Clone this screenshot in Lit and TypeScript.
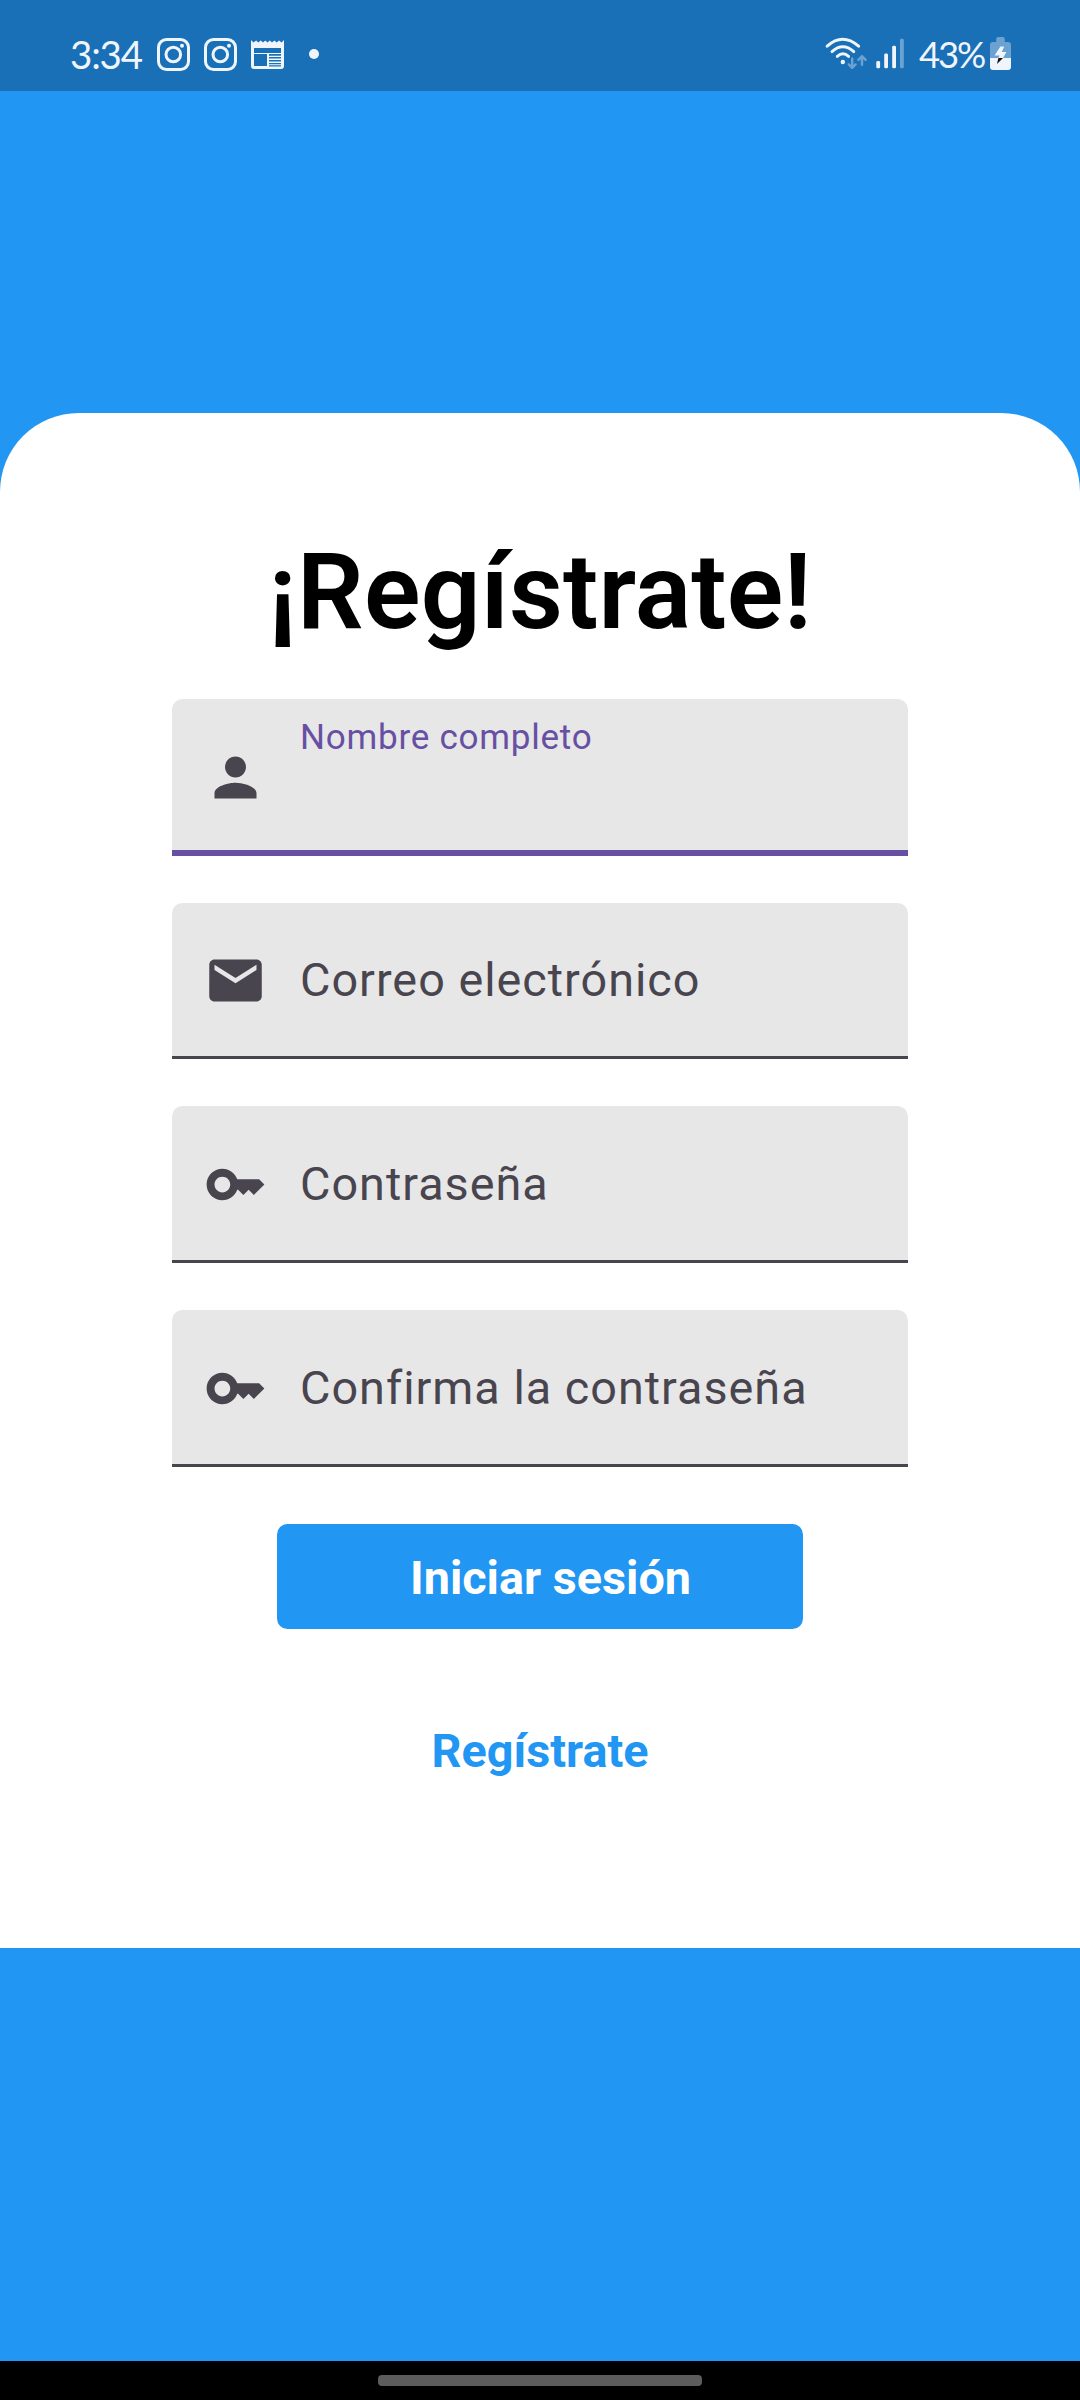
import { LitElement, html, css, svg } from "lit";
import { customElement, property } from "lit/decorators.js";

const ICONS: Record<string, unknown> = {
  person: svg`<path d="M12 12c2.21 0 4-1.79 4-4s-1.79-4-4-4-4 1.79-4 4 1.79 4 4 4zm0 2c-2.67 0-8 1.34-8 4v2h16v-2c0-2.66-5.33-4-8-4z"/>`,
  email: svg`<path d="M20 4H4c-1.1 0-1.99.9-1.99 2L2 18c0 1.1.9 2 2 2h16c1.1 0 2-.9 2-2V6c0-1.1-.9-2-2-2zm0 4l-8 5-8-5V6l8 5 8-5v2z"/>`,
  key: svg`<path d="M21 10h-8.35C11.83 7.67 9.61 6 7 6c-3.31 0-6 2.69-6 6s2.69 6 6 6c2.61 0 4.83-1.67 5.65-4H13l2 2 2-2 2 2 4-4.04L21 10zM7 15c-1.65 0-3-1.35-3-3s1.35-3 3-3 3 1.35 3 3-1.35 3-3 3z"/>`,
};

@customElement("text-field")
class TextField extends LitElement {
  @property() label = "";
  @property() icon = "person";
  @property({ type: Boolean, reflect: true }) focused = false;

  static styles = css`
    :host {
      display: flex;
      flex-direction: column;
      box-sizing: border-box;
      height: 156.5px;
      background: #e7e7e7;
      border-radius: 10.5px 10.5px 0 0;
      color: #49454f;
    }
    .row {
      flex: 1;
      display: flex;
      align-items: center;
      padding-left: 32px;
    }
    .icon {
      width: 63px;
      height: 63px;
      fill: currentColor;
      margin-right: 33px;
      flex: none;
    }
    .label {
      font-size: 46.75px;
      line-height: 63px;
      letter-spacing: 1px;
      white-space: nowrap;
    }
    .line {
      height: 3px;
      margin-top: -3px;
      background: #49454f;
    }
    :host([focused]) .label {
      align-self: flex-start;
      margin-top: 14px;
      font-size: 35.06px;
      line-height: 48px;
      letter-spacing: 0.75px;
      color: #6750a4;
    }
    :host([focused]) .line {
      height: 5.5px;
      margin-top: -5.5px;
      background: #6750a4;
    }
  `;

  render() {
    return html`
      <div class="row">
        <svg class="icon" viewBox="0 0 24 24">${ICONS[this.icon]}</svg>
        <span class="label">${this.label}</span>
      </div>
      <div class="line"></div>
    `;
  }
}

@customElement("status-bar")
class StatusBar extends LitElement {
  static styles = css`
    :host {
      display: flex;
      justify-content: space-between;
      box-sizing: border-box;
      height: 91px;
      padding: 36px 69px 0 70px;
      background: #1a70b6;
      color: #f0f5fc;
      font-family: Lato, "Open Sans", sans-serif;
      font-size: 38.5px;
      line-height: 36px;
    }
    .group {
      display: flex;
      height: 36px;
    }
    svg {
      display: block;
      height: 36px;
      flex: none;
    }
    .time {
      width: 87px;
      letter-spacing: -1.2px;
    }
    .photo {
      margin-right: 14px;
    }
    .dot {
      width: 10px;
      height: 10px;
      border-radius: 50%;
      background: currentColor;
      margin: 13px 0 0 25px;
    }
    .wifi {
      margin-right: 9px;
    }
    .signal {
      margin-right: 15px;
    }
    .percent {
      width: 71px;
      letter-spacing: -2.2px;
      font-size: 36.5px;
      white-space: nowrap;
    }
  `;

  private photo() {
    return html`<svg class="photo" width="33" viewBox="0 0 33 36" fill="none" stroke="#f0f5fc">
      <rect x="1.5" y="3.5" width="30" height="30" rx="8" stroke-width="3" />
      <circle cx="16.3" cy="18.5" r="7.3" stroke-width="3" />
      <circle cx="25" cy="9.8" r="2" fill="#f0f5fc" stroke="none" />
    </svg>`;
  }

  render() {
    return html`
      <div class="group">
        <span class="time">3:34</span>
        ${this.photo()}${this.photo()}
        <svg width="33" viewBox="0 0 33 36">
          <path
            fill="#f0f5fc"
            fill-rule="evenodd"
            d="M0 4 2.4 6.6 5.2 4.4 7.2 6.6 9.8 4.4 12 6.6 14.3 4.4 16.5 6.6 18.8 4.4 21 6.6 23.3 4.4 25.8 6.6 28 4.4 30.6 6.6 33 4V30a3 3 0 0 1-3 3H3a3 3 0 0 1-3-3zM3 12v5h27v-5zM3 18v12h13V18zM18 18v1.8h12V18zM18 21v1.6h12V21zM18 24v1.6h12V24zM18 27v1.2h12V27zM18 29.2v1.2h12v-1.2z"
          />
        </svg>
        <div class="dot"></div>
      </div>
      <div class="group">
        <svg class="wifi" width="42" viewBox="0 0 42 36" fill="none" stroke-linecap="round" stroke-linejoin="round">
          <g stroke="#f0f5fc" stroke-width="2.9">
            <path d="M2.2 10.2Q17.5-3.6 33.6 10.2" />
            <path d="M7 15.6Q17.8 5.8 28.8 15.6" />
            <path d="M12.3 20.4Q18 15 23.6 20.4" />
          </g>
          <circle cx="17.8" cy="26" r="2.2" fill="#f0f5fc" />
          <g stroke="#6ba2d2" stroke-width="2.4">
            <path d="M27.2 22.5V31.2M23.8 28.4 27.2 31.8 30.6 28.4" />
            <path d="M37 28.8V20.5M33.4 23.8 37 20.2 40.6 23.8" />
          </g>
        </svg>
        <svg class="signal" width="28" viewBox="0 0 28 36">
          <g fill="#f0f5fc">
            <rect x="0.3" y="25" width="3.8" height="7.3" rx="1.4" />
            <rect x="8.2" y="17.5" width="3.8" height="14.8" rx="1.4" />
            <rect x="16.2" y="9.8" width="3.8" height="22.5" rx="1.4" />
          </g>
          <rect x="24" y="2.8" width="3.8" height="29.5" rx="1.4" fill="#6ba2d2" />
        </svg>
        <span class="percent">43%</span>
        <svg width="21" viewBox="0 0 21 36">
          <path fill="#6ba2d2" d="M6.2 6V3q0-2 2-2h4.6q2 0 2 2V6H18q3 0 3 3V22H0V9q0-3 3-3z" />
          <path fill="#f0f5fc" d="M0 22H21V31q0 3-3 3H3q-3 0-3-3z" />
          <path fill="#f0f5fc" d="M10.4 10.6H14.2L11.8 16H16.4L13 22H8.4L9.6 19.4H4.6z" />
          <path fill="#111" d="M8.4 22H13L7 28z" />
        </svg>
      </div>
    `;
  }
}

@customElement("app-root")
class AppRoot extends LitElement {
  static styles = css`
    :host {
      display: flex;
      flex-direction: column;
      width: 1080px;
      height: 2400px;
      background: #2196f3;
      font-family: Roboto, sans-serif;
    }
    .card {
      display: flex;
      flex-direction: column;
      align-items: center;
      box-sizing: border-box;
      margin-top: 322px;
      height: 1534.5px;
      padding-top: 118px;
      background: #fff;
      border-radius: 78.75px 78.75px 0 0;
    }
    h1 {
      margin: 0;
      height: 168px;
      font-size: 105px;
      line-height: 123px;
      font-weight: 600;
      letter-spacing: 0.2px;
      color: #000;
      white-space: nowrap;
    }
    .fields {
      display: flex;
      flex-direction: column;
      gap: 47.2px;
      width: 736px;
    }
    button {
      border: 0;
      padding: 0;
      font: 700 46.75px / 63px Roboto, sans-serif;
      white-space: nowrap;
    }
    .primary {
      box-sizing: border-box;
      width: 526px;
      height: 105px;
      margin-top: 57.3px;
      padding: 4px 0 0 21px;
      border-radius: 10.5px;
      background: #2196f3;
      color: #fff;
    }
    .link {
      margin-top: 91px;
      background: none;
      color: #2196f3;
    }
    .nav {
      display: flex;
      justify-content: center;
      margin-top: auto;
      height: 39px;
      background: #000;
    }
    .handle {
      width: 324px;
      height: 11px;
      margin-top: 14px;
      border-radius: 4px;
      background: #5c5c5c;
    }
  `;

  render() {
    return html`
      <status-bar></status-bar>
      <main class="card">
        <h1>¡Regístrate!</h1>
        <div class="fields">
          <text-field focused icon="person" label="Nombre completo"></text-field>
          <text-field icon="email" label="Correo electrónico"></text-field>
          <text-field icon="key" label="Contraseña"></text-field>
          <text-field icon="key" label="Confirma la contraseña"></text-field>
        </div>
        <button class="primary">Iniciar sesión</button>
        <button class="link">Regístrate</button>
      </main>
      <div class="nav"><div class="handle"></div></div>
    `;
  }
}
